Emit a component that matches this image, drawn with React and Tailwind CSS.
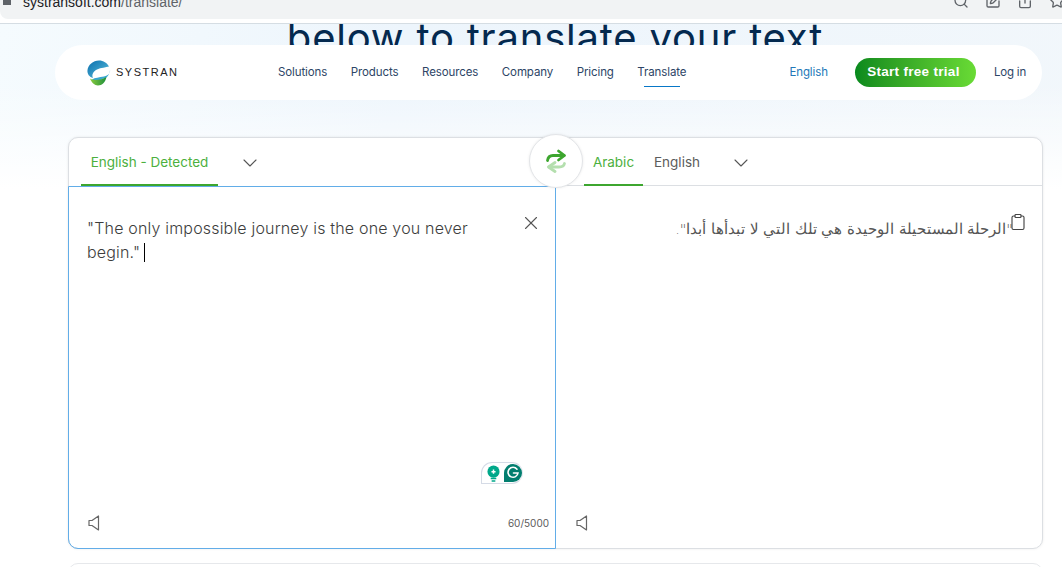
import { ChevronDown, X, Search, SquarePen, Share, Star, Clipboard } from 'lucide-react'

const navLinks = ['Solutions', 'Products', 'Resources', 'Company', 'Pricing', 'Translate']

function Logo() {
    return (
        <svg width="24" height="26" viewBox="0 0 24 26">
            <defs>
                <linearGradient id="logoBlue" x1="0" y1="0" x2="1" y2="1">
                    <stop offset="0" stopColor="#0b6fae" />
                    <stop offset="1" stopColor="#5cc0dc" />
                </linearGradient>
                <linearGradient id="logoGreen" x1="0" y1="0" x2="1" y2="0">
                    <stop offset="0" stopColor="#8ccb3f" />
                    <stop offset="1" stopColor="#1c8f3a" />
                </linearGradient>
            </defs>
            <path d="M12 0.5C6 0.5 1 5 0.5 10C0 14 2.5 17 6 18C4.5 15 6 11.5 10 9.5C14 7.5 19 7.5 22 6.5C20 3 16.5 0.5 12 0.5Z" fill="url(#logoBlue)" />
            <path d="M23 10C23.5 13 21.5 15.5 17 16.5C12 17.5 8 17.5 5 19.5C8 22 11 23 14 22C12 20.5 14 19 17 18.5C20 18 23 14 23 10Z" fill="#37a6cf" />
            <path d="M3 18.5C7 21 14 20 19.5 17C18.5 22 15 25.5 11 25.5C7.5 25.5 4.5 22.5 3 18.5Z" fill="url(#logoGreen)" />
        </svg>
    )
}

function SwapIcon() {
    return (
        <svg width="22" height="24" viewBox="0 0 22 24" fill="none" strokeWidth="2.8" strokeLinecap="round" strokeLinejoin="round">
            <path d="M2.5 11.5C3 8 5 6.5 8 6.5H19" stroke="#3da62f" />
            <path d="M13.5 2L19.5 6.5L13.5 11" stroke="#3da62f" />
            <path d="M19.5 14.5C19 17 17 18 14 18H4" stroke="#b4dfae" />
            <path d="M10 13.5L3.5 18L10 22.5" stroke="#b4dfae" />
        </svg>
    )
}

function SpeakerIcon() {
    return (
        <svg width="12" height="16" viewBox="0 0 12 16" fill="none" stroke="#666" strokeWidth="1.2" strokeLinejoin="round">
            <path d="M1 5.5H4L10.5 1V15L4 10.5H1Z" />
        </svg>
    )
}

function GrammarlyBadge() {
    return (
        <div className="flex items-center gap-[4px] w-[42px] h-[22px] pl-[5px] border border-[#d5dbe6] border-r-[#e4e8ef] rounded-tl-[11px] rounded-r-[11px] bg-white">
            <svg width="13" height="17" viewBox="0 0 14 18">
                <circle cx="7" cy="7" r="6.5" fill="#00a88a" />
                <path d="M7 4.8V9.2M4.8 7H9.2" stroke="#fff" strokeWidth="1.6" />
                <path d="M4 14.5H10M5 17H9" stroke="#00a88a" strokeWidth="1.6" />
            </svg>
            <div className="flex items-center justify-center w-[18px] h-[18px] rounded-full rounded-bl-none bg-[#027e6f]">
                <svg width="14" height="14" viewBox="0 0 14 14" fill="none">
                    <path d="M11 3.2A5 5 0 1 0 12 7H7.5" stroke="#fff" strokeWidth="1.6" strokeLinecap="round" />
                </svg>
            </div>
        </div>
    )
}

export default function App() {
    return (
        <div className="relative h-[567px] overflow-hidden bg-white font-['Inter',sans-serif]">
            {/* browser chrome, cut off at the top */}
            <div className="flex justify-between h-[19px] overflow-hidden rounded-bl-lg bg-[#f1f3f4] text-[#5f6368]">
                <div className="flex items-start -mt-[5px] pl-[3px]">
                    <div className="w-[8px] h-[8px] mt-[2px] bg-[#5f6368]" />
                    <span className="ml-[12px] font-['Liberation_Sans',sans-serif] text-[14px] leading-[15px] text-[#202124]">
                        systransoft.com<span className="text-[#5f6368]">/translate/</span>
                    </span>
                </div>
                <div className="flex items-start gap-[16px] -mt-[7px] mr-[-3px]">
                    <Search size={16} />
                    <SquarePen size={16} />
                    <Share size={16} />
                    <Star size={16} />
                </div>
            </div>
            <div className="h-[5px] border-b border-[#d5dde3] bg-white" />

            <div className="h-[543px] bg-[linear-gradient(180deg,rgba(255,255,255,0)_60px,#ffffff_165px),linear-gradient(100deg,#f5fbfe_0%,#edf5fc_35%,#f2f7fb_100%)]">
                {/* hero heading sliding under the nav */}
                <div className="h-[21px] overflow-hidden pl-[48px] text-center">
                    <h1 className="-mt-[10px] text-[40px] leading-[48px] font-normal tracking-[0.8px] whitespace-nowrap text-[#04294f]">
                        below to translate your text
                    </h1>
                </div>

                <nav className="flex items-center h-[55px] ml-[55px] mr-[20px] pl-[32px] pr-[17px] rounded-[28px] bg-white">
                    <div className="flex items-center gap-[5px] w-[191px]">
                        <Logo />
                        <span className="font-['Liberation_Sans',sans-serif] text-[11px] tracking-[1.5px] text-[#222]">SYSTRAN</span>
                    </div>
                    <ul className="flex gap-[23.5px] text-[11.5px] tracking-[-0.1px] text-[#2d4566]">
                        {navLinks.map((link) => (
                            <li key={link} className="relative">
                                {link}
                                {link === 'Translate' && (
                                    <div className="absolute left-[7px] right-[6px] top-[22px] h-px bg-[#0877c7]" />
                                )}
                            </li>
                        ))}
                    </ul>
                    <span className="ml-auto text-[11.5px] tracking-[-0.1px] text-[#2378b8]">English</span>
                    <button className="ml-[27px] pr-[4px] w-[121px] h-[29px] rounded-full bg-gradient-to-r from-[#078a1e] to-[#69db35] font-['Liberation_Sans',sans-serif] text-[13.5px] font-bold tracking-[0.3px] text-white">
                        Start free trial
                    </button>
                    <span className="ml-[18px] mr-[-1px] text-[11.5px] tracking-[-0.2px] text-[#2d4566]">Log in</span>
                </nav>

                {/* translator card */}
                <div className="relative flex flex-col h-[412px] mt-[37px] ml-[68px] mr-[19px] rounded-[10px] border border-[#dcdfe3] bg-white shadow-[0_0_3px_rgba(0,0,0,0.08)]">
                    <div className="flex h-[48px] text-[13.5px] font-light">
                        <div className="flex w-[487px] pl-[12px]">
                            <div className="flex items-center justify-center w-[137px] pt-[3px] border-b-[2px] border-[#3da62f] font-normal text-[#4cb03e]">
                                English - Detected
                            </div>
                            <ChevronDown size={24} strokeWidth={1.1} className="self-center ml-[20px] mt-[2px] text-[#555]" />
                        </div>
                        <div className="flex flex-1 border-b border-[#dcdfe3] pl-[28px]">
                            <div className="flex items-center justify-center w-[59px] pt-[3px] -mb-px border-b-[2px] border-[#3da62f] font-normal text-[#4cb03e]">
                                Arabic
                            </div>
                            <span className="self-center ml-[11px] pt-[2px] font-normal text-[#5c5c5c]">English</span>
                            <ChevronDown size={24} strokeWidth={1.1} className="self-center ml-[29px] mt-[2px] text-[#555]" />
                        </div>
                    </div>

                    <div className="flex flex-1 min-h-0">
                        <div className="flex flex-col w-[488px] -ml-px -mb-px rounded-bl-[10px] border border-[#62ade8] pt-[29px] pl-[18px] pr-[6px] pb-[17px]">
                            <div className="flex items-start">
                                <p className="w-[400px] text-[16px] leading-[24px] font-light tracking-[0.18px] text-[#3d3d3d]">
                                    "The only impossible journey is the one you never begin."
                                    <span className="inline-block w-px h-[19px] ml-[4px] align-[-4px] bg-black" />
                                </p>
                                <X size={22} strokeWidth={1.2} className="ml-[33px] mt-[-4px] text-[#555]" />
                            </div>
                            <div className="flex justify-end mt-auto mb-[31px] pr-[26px]">
                                <GrammarlyBadge />
                            </div>
                            <div className="flex items-end justify-between">
                                <div className="ml-px">
                                    <SpeakerIcon />
                                </div>
                                <span className="text-[10px] text-[#5c5c5c]">60/5000</span>
                            </div>
                        </div>
                        <div className="flex flex-col flex-1 pt-[29px] pl-[19px] pr-[15px] pb-[17px]">
                            <div className="flex items-start justify-end">
                                <p dir="rtl" className="mt-[2px] font-['DejaVu_Sans',serif] text-[14.5px] leading-[24px] font-light text-[#555]">
                                    "الرحلة المستحيلة الوحيدة هي تلك التي لا تبدأها أبدا".
                                </p>
                                <Clipboard size={18} strokeWidth={1.5} className="-ml-[4px] -mt-[2px] text-[#444]" />
                            </div>
                            <div className="mt-auto ml-px">
                                <SpeakerIcon />
                            </div>
                        </div>
                    </div>

                    <div className="absolute left-[460px] -top-[4px] flex items-center justify-center w-[54px] h-[54px] rounded-full border border-[#e3e5e8] bg-white shadow-[0_0_3px_rgba(0,0,0,0.08)]">
                        <SwapIcon />
                    </div>
                </div>

                <div className="h-[40px] mt-[14px] ml-[68px] mr-[19px] rounded-[10px] border border-[#e6e8eb] bg-white" />
            </div>
        </div>
    )
}
